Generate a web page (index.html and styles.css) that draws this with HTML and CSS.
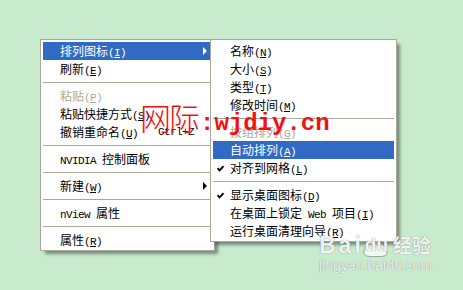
FILE: index.html
```html
<!DOCTYPE html>
<html lang="zh-CN">

<head>
    <meta charset="UTF-8">
    <meta name="viewport" content="width=device-width, initial-scale=1.0">
    <title>桌面右键菜单</title>
    <link rel="stylesheet" href="styles.css">
</head>

<body>
    <div class="desktop">
        <div class="menu main-menu">
            <div class="item active">排列图标<span class="key">(<u>I</u>)</span><span class="arrow"></span></div>
            <div class="item">刷新<span class="key">(<u>E</u>)</span></div>
            <div class="sep"></div>
            <div class="item disabled">粘贴<span class="key">(<u>P</u>)</span></div>
            <div class="item">粘贴快捷方式<span class="key">(<u>S</u>)</span></div>
            <div class="item"><span class="shortcut">Ctrl+Z</span>撤销重命名<span class="key">(<u>U</u>)</span></div>
            <div class="sep"></div>
            <div class="item"><span class="lat">NVIDIA </span>控制面板</div>
            <div class="sep"></div>
            <div class="item">新建<span class="key">(<u>W</u>)</span><span class="arrow"></span></div>
            <div class="sep"></div>
            <div class="item"><span class="lat">nView </span>属性</div>
            <div class="sep"></div>
            <div class="item">属性<span class="key">(<u>R</u>)</span></div>
        </div>

        <!-- submenu of 排列图标 -->
        <div class="menu sub-menu">
            <div class="item">名称<span class="key">(<u>N</u>)</span></div>
            <div class="item">大小<span class="key">(<u>S</u>)</span></div>
            <div class="item">类型<span class="key">(<u>T</u>)</span></div>
            <div class="item">修改时间<span class="key">(<u>M</u>)</span></div>
            <div class="sep"></div>
            <div class="item disabled">按组排列<span class="key">(<u>G</u>)</span></div>
            <div class="item active">自动排列<span class="key">(<u>A</u>)</span></div>
            <div class="item"><svg class="check" width="7" height="7" viewBox="0 0 7 7"><polyline points="0.5,3.2 2.6,5.4 6.5,1.2" /></svg>对齐到网格<span class="key">(<u>L</u>)</span></div>
            <div class="sep"></div>
            <div class="item"><svg class="check" width="7" height="7" viewBox="0 0 7 7"><polyline points="0.5,3.2 2.6,5.4 6.5,1.2" /></svg>显示桌面图标<span class="key">(<u>D</u>)</span></div>
            <div class="item">在桌面上锁定<span class="lat"> Web </span>项目<span class="key">(<u>I</u>)</span></div>
            <div class="item">运行桌面清理向导<span class="key">(<u>R</u>)</span></div>
        </div>

        <div class="stamp"><span class="stamp-cn">网际</span><span class="stamp-lat">:wjdiy.cn</span></div>

        <div class="baidu">
            <div class="baidu-brand">
                <span class="bai">Bai</span>
                <span class="du">
                    <svg class="paw" width="34" height="30" viewBox="0 0 34 30">
                        <ellipse cx="5" cy="10" rx="3.2" ry="4" />
                        <ellipse cx="12" cy="4.8" rx="3.4" ry="4.2" />
                        <ellipse cx="21" cy="4.8" rx="3.4" ry="4.2" />
                        <ellipse cx="28" cy="10.5" rx="3.2" ry="4" />
                        <path d="M16.5 13 C 23 13 29 21 28 25.5 C 27 29 21 28.5 16.5 28.5 C 12 28.5 6 29 5 25.5 C 4 21 10 13 16.5 13 Z" />
                    </svg>
                    du
                </span>
                <span class="jy">经验</span>
            </div>
            <div class="baidu-url">jingyan.baidu.com</div>
        </div>
    </div>
</body>

</html>
```

FILE: styles.css
```css
* {
    box-sizing: border-box;
}

body {
    margin: 0;
    background-color: #c8ebcd;
}

.desktop {
    position: relative;
    width: 463px;
    height: 290px;
    padding: 39px 0 0 40px;
    overflow: hidden;
    font-family: "Noto Sans CJK SC", sans-serif;
    font-size: 12px;
    color: #000;
}

.menu {
    background-color: #fff;
    border: 1px solid #aca899;
    padding: 2px 2px 1px;
    box-shadow: 4px 4px 3px -1px rgba(0, 0, 0, 0.4);
}

.main-menu {
    width: 175px;
}

.sub-menu {
    position: absolute;
    left: 210px;
    top: 39px;
    width: 187px;
}

.item {
    position: relative;
    height: 18px;
    line-height: 18px;
    padding-left: 17px;
    white-space: nowrap;
}

.item.active {
    background-color: #316ac5;
    color: #fff;
}

.item.disabled {
    color: #aca899;
}

.key,
.lat,
.shortcut {
    font-family: "Liberation Mono", monospace;
    font-size: 11px;
    letter-spacing: -0.6px;
}

.key u {
    text-underline-offset: 1px;
}

.shortcut {
    float: right;
    padding-right: 18px;
}

.arrow {
    position: absolute;
    right: 5px;
    top: 5px;
    width: 0;
    height: 0;
    border-left: 4px solid currentColor;
    border-top: 4px solid transparent;
    border-bottom: 4px solid transparent;
}

.check {
    position: absolute;
    left: 4px;
    top: 6px;
}

.check polyline {
    fill: none;
    stroke: #000;
    stroke-width: 1.8;
}

.sep {
    height: 9px;
    display: flex;
    align-items: center;
}

.sep::before {
    content: "";
    flex: 1;
    height: 1px;
    background-color: #aca899;
}

.stamp {
    position: absolute;
    left: 140px;
    top: 102px;
    line-height: 30px;
    color: #f31010;
    white-space: nowrap;
}

.stamp-cn {
    font-family: "Noto Sans CJK SC", sans-serif;
    font-size: 31px;
    letter-spacing: -2px;
    font-weight: 300;
}

.stamp-lat {
    font-family: "Liberation Mono", monospace;
    font-size: 24px;
    font-weight: bold;
    margin-left: 2px;
}

.baidu {
    position: absolute;
    left: 319px;
    top: 216px;
    color: rgba(255, 255, 255, 0.92);
    text-shadow: 0 0 1px rgba(80, 80, 80, 0.8);
}

.baidu-brand {
    display: flex;
    align-items: flex-end;
    height: 40px;
}

.bai {
    font-family: "Liberation Sans", sans-serif;
    font-weight: bold;
    font-size: 23px;
    line-height: 22px;
    letter-spacing: 3px;
}

.du {
    position: relative;
    font-family: "Liberation Sans", sans-serif;
    font-weight: bold;
    font-size: 19px;
    line-height: 22px;
    padding: 0 3px 0 1px;
}

.paw {
    position: absolute;
    left: -5px;
    bottom: -2px;
    z-index: -1;
}

.paw ellipse,
.paw path {
    fill: rgba(255, 255, 255, 0.75);
    stroke: rgba(110, 110, 110, 0.6);
    stroke-width: 1;
}

.jy {
    font-family: "Noto Sans CJK SC", sans-serif;
    font-weight: bold;
    font-size: 19px;
    line-height: 22px;
    margin-left: 2px;
}

.baidu-url {
    font-family: "Liberation Sans", sans-serif;
    font-size: 14px;
    line-height: 16px;
    margin-top: 1px;
}
```
